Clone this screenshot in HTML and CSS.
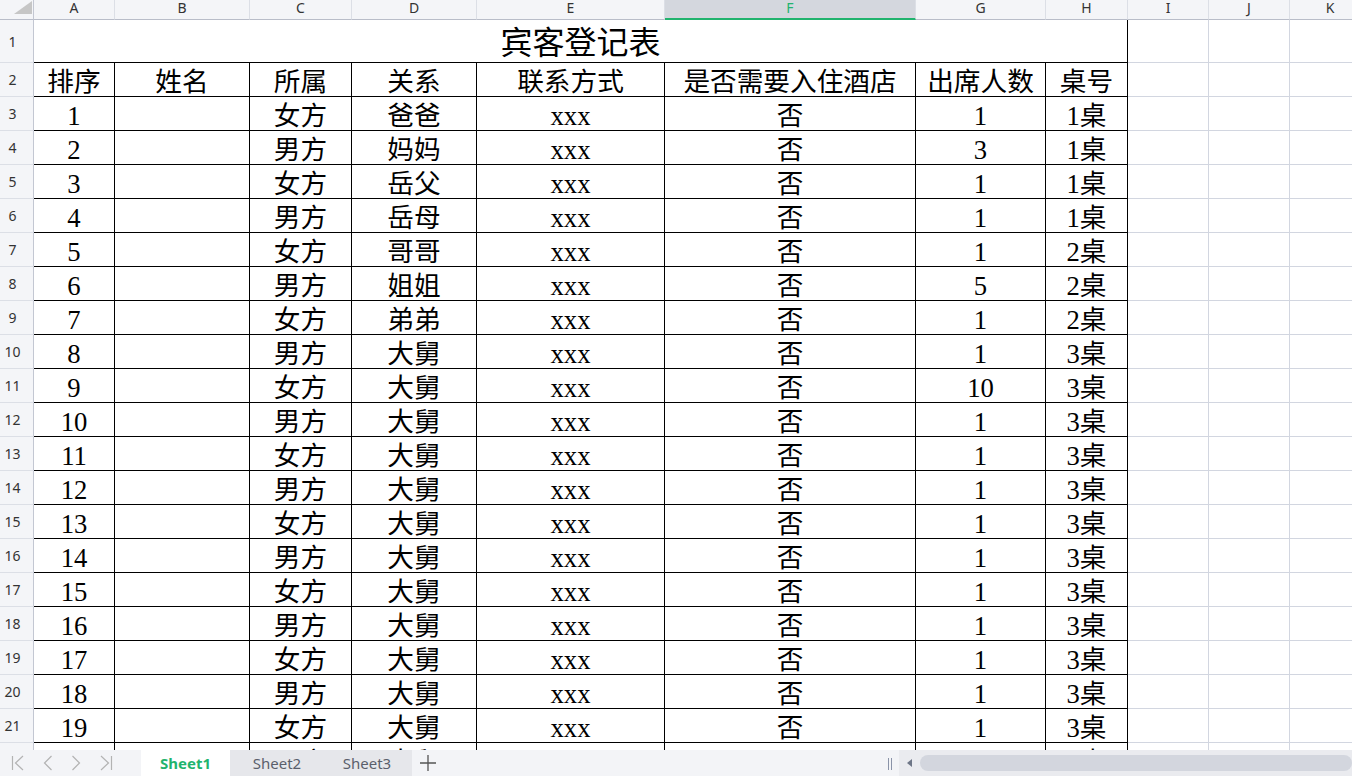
FILE: index.html
```html
<!DOCTYPE html>
<html>
  <head>
    <title>宾客登记表</title>
    <meta charset="UTF-8" />
    <link rel="stylesheet" href="styles.css">
  </head>

  <body>
    <div class="book">
      <div class="sheet">
        <div class="row head">
          <div class="corner"></div>
          <div class="ch">A</div><div class="ch">B</div><div class="ch">C</div><div class="ch">D</div>
          <div class="ch">E</div><div class="ch sel">F</div><div class="ch">G</div><div class="ch">H</div>
          <div class="ch">I</div><div class="ch">J</div><div class="ch">K</div>
        </div>

        <div class="row r1">
          <div class="rh">1</div>
          <div class="cell title">宾客登记表</div>
          <div class="blank"></div><div class="blank"></div><div class="blank"></div>
        </div>

        <div class="row">
          <div class="rh">2</div>
          <div class="cell">排序</div><div class="cell">姓名</div><div class="cell">所属</div><div class="cell">关系</div>
          <div class="cell">联系方式</div><div class="cell">是否需要入住酒店</div><div class="cell">出席人数</div><div class="cell">桌号</div>
          <div class="blank"></div><div class="blank"></div><div class="blank"></div>
        </div>

        <div class="row">
          <div class="rh">3</div>
          <div class="cell">1</div><div class="cell"></div><div class="cell">女方</div><div class="cell">爸爸</div>
          <div class="cell">xxx</div><div class="cell">否</div><div class="cell">1</div><div class="cell">1桌</div>
          <div class="blank"></div><div class="blank"></div><div class="blank"></div>
        </div>
        <div class="row">
          <div class="rh">4</div>
          <div class="cell">2</div><div class="cell"></div><div class="cell">男方</div><div class="cell">妈妈</div>
          <div class="cell">xxx</div><div class="cell">否</div><div class="cell">3</div><div class="cell">1桌</div>
          <div class="blank"></div><div class="blank"></div><div class="blank"></div>
        </div>
        <div class="row">
          <div class="rh">5</div>
          <div class="cell">3</div><div class="cell"></div><div class="cell">女方</div><div class="cell">岳父</div>
          <div class="cell">xxx</div><div class="cell">否</div><div class="cell">1</div><div class="cell">1桌</div>
          <div class="blank"></div><div class="blank"></div><div class="blank"></div>
        </div>
        <div class="row">
          <div class="rh">6</div>
          <div class="cell">4</div><div class="cell"></div><div class="cell">男方</div><div class="cell">岳母</div>
          <div class="cell">xxx</div><div class="cell">否</div><div class="cell">1</div><div class="cell">1桌</div>
          <div class="blank"></div><div class="blank"></div><div class="blank"></div>
        </div>
        <div class="row">
          <div class="rh">7</div>
          <div class="cell">5</div><div class="cell"></div><div class="cell">女方</div><div class="cell">哥哥</div>
          <div class="cell">xxx</div><div class="cell">否</div><div class="cell">1</div><div class="cell">2桌</div>
          <div class="blank"></div><div class="blank"></div><div class="blank"></div>
        </div>
        <div class="row">
          <div class="rh">8</div>
          <div class="cell">6</div><div class="cell"></div><div class="cell">男方</div><div class="cell">姐姐</div>
          <div class="cell">xxx</div><div class="cell">否</div><div class="cell">5</div><div class="cell">2桌</div>
          <div class="blank"></div><div class="blank"></div><div class="blank"></div>
        </div>
        <div class="row">
          <div class="rh">9</div>
          <div class="cell">7</div><div class="cell"></div><div class="cell">女方</div><div class="cell">弟弟</div>
          <div class="cell">xxx</div><div class="cell">否</div><div class="cell">1</div><div class="cell">2桌</div>
          <div class="blank"></div><div class="blank"></div><div class="blank"></div>
        </div>
        <div class="row">
          <div class="rh">10</div>
          <div class="cell">8</div><div class="cell"></div><div class="cell">男方</div><div class="cell">大舅</div>
          <div class="cell">xxx</div><div class="cell">否</div><div class="cell">1</div><div class="cell">3桌</div>
          <div class="blank"></div><div class="blank"></div><div class="blank"></div>
        </div>
        <div class="row">
          <div class="rh">11</div>
          <div class="cell">9</div><div class="cell"></div><div class="cell">女方</div><div class="cell">大舅</div>
          <div class="cell">xxx</div><div class="cell">否</div><div class="cell">10</div><div class="cell">3桌</div>
          <div class="blank"></div><div class="blank"></div><div class="blank"></div>
        </div>
        <div class="row">
          <div class="rh">12</div>
          <div class="cell">10</div><div class="cell"></div><div class="cell">男方</div><div class="cell">大舅</div>
          <div class="cell">xxx</div><div class="cell">否</div><div class="cell">1</div><div class="cell">3桌</div>
          <div class="blank"></div><div class="blank"></div><div class="blank"></div>
        </div>
        <div class="row">
          <div class="rh">13</div>
          <div class="cell">11</div><div class="cell"></div><div class="cell">女方</div><div class="cell">大舅</div>
          <div class="cell">xxx</div><div class="cell">否</div><div class="cell">1</div><div class="cell">3桌</div>
          <div class="blank"></div><div class="blank"></div><div class="blank"></div>
        </div>
        <div class="row">
          <div class="rh">14</div>
          <div class="cell">12</div><div class="cell"></div><div class="cell">男方</div><div class="cell">大舅</div>
          <div class="cell">xxx</div><div class="cell">否</div><div class="cell">1</div><div class="cell">3桌</div>
          <div class="blank"></div><div class="blank"></div><div class="blank"></div>
        </div>
        <div class="row">
          <div class="rh">15</div>
          <div class="cell">13</div><div class="cell"></div><div class="cell">女方</div><div class="cell">大舅</div>
          <div class="cell">xxx</div><div class="cell">否</div><div class="cell">1</div><div class="cell">3桌</div>
          <div class="blank"></div><div class="blank"></div><div class="blank"></div>
        </div>
        <div class="row">
          <div class="rh">16</div>
          <div class="cell">14</div><div class="cell"></div><div class="cell">男方</div><div class="cell">大舅</div>
          <div class="cell">xxx</div><div class="cell">否</div><div class="cell">1</div><div class="cell">3桌</div>
          <div class="blank"></div><div class="blank"></div><div class="blank"></div>
        </div>
        <div class="row">
          <div class="rh">17</div>
          <div class="cell">15</div><div class="cell"></div><div class="cell">女方</div><div class="cell">大舅</div>
          <div class="cell">xxx</div><div class="cell">否</div><div class="cell">1</div><div class="cell">3桌</div>
          <div class="blank"></div><div class="blank"></div><div class="blank"></div>
        </div>
        <div class="row">
          <div class="rh">18</div>
          <div class="cell">16</div><div class="cell"></div><div class="cell">男方</div><div class="cell">大舅</div>
          <div class="cell">xxx</div><div class="cell">否</div><div class="cell">1</div><div class="cell">3桌</div>
          <div class="blank"></div><div class="blank"></div><div class="blank"></div>
        </div>
        <div class="row">
          <div class="rh">19</div>
          <div class="cell">17</div><div class="cell"></div><div class="cell">女方</div><div class="cell">大舅</div>
          <div class="cell">xxx</div><div class="cell">否</div><div class="cell">1</div><div class="cell">3桌</div>
          <div class="blank"></div><div class="blank"></div><div class="blank"></div>
        </div>
        <div class="row">
          <div class="rh">20</div>
          <div class="cell">18</div><div class="cell"></div><div class="cell">男方</div><div class="cell">大舅</div>
          <div class="cell">xxx</div><div class="cell">否</div><div class="cell">1</div><div class="cell">3桌</div>
          <div class="blank"></div><div class="blank"></div><div class="blank"></div>
        </div>
        <div class="row">
          <div class="rh">21</div>
          <div class="cell">19</div><div class="cell"></div><div class="cell">女方</div><div class="cell">大舅</div>
          <div class="cell">xxx</div><div class="cell">否</div><div class="cell">1</div><div class="cell">3桌</div>
          <div class="blank"></div><div class="blank"></div><div class="blank"></div>
        </div>
        <div class="row">
          <div class="rh">22</div>
          <div class="cell">20</div><div class="cell"></div><div class="cell">男方</div><div class="cell">大舅</div>
          <div class="cell">xxx</div><div class="cell">否</div><div class="cell">1</div><div class="cell">3桌</div>
          <div class="blank"></div><div class="blank"></div><div class="blank"></div>
        </div>
      </div>

      <div class="tabbar">
        <div class="nav">
          <svg width="14" height="16" viewBox="0 0 14 16"><path d="M1.5 1v14M12 1L4.5 8 12 15" fill="none" stroke="#b3b3b3" stroke-width="1.2"/></svg>
          <svg width="10" height="16" viewBox="0 0 10 16"><path d="M8.5 1L1.5 8 8.5 15" fill="none" stroke="#b3b3b3" stroke-width="1.2"/></svg>
          <svg width="10" height="16" viewBox="0 0 10 16"><path d="M1.5 1L8.5 8 1.5 15" fill="none" stroke="#b3b3b3" stroke-width="1.2"/></svg>
          <svg width="14" height="16" viewBox="0 0 14 16"><path d="M12.5 1v14M2 1l7.5 7L2 15" fill="none" stroke="#b3b3b3" stroke-width="1.2"/></svg>
        </div>
        <div class="tab active">Sheet1</div>
        <div class="tabs">
          <div class="tab">Sheet2</div>
          <div class="tab">Sheet3</div>
        </div>
        <div class="add">
          <svg width="18" height="18" viewBox="0 0 18 18"><path d="M9 1v16M1 9h16" stroke="#555" stroke-width="1.3"/></svg>
        </div>
        <div class="spacer"></div>
        <div class="split"></div>
        <div class="hscroll">
          <span class="arrow"></span>
          <div class="thumb"></div>
        </div>
      </div>
    </div>
  </body>
</html>
```

FILE: styles.css
```css
body {
  margin: 0;
  overflow: hidden;
  background: #fff;
}

.book {
  width: 1352px;
  height: 778px;
  display: flex;
  flex-direction: column;
}

.sheet {
  height: 750px;
  overflow: hidden;
  flex-shrink: 0;
}

.row {
  display: grid;
  grid-template-columns: 34px 81px 135px 102px 125px 188px 251px 130px 82px 81px 81px 81px;
  height: 34px;
}

.row > div {
  box-sizing: border-box;
}

.head {
  height: 20px;
}

.r1 {
  height: 43px;
}

/* column and row headers */
.corner {
  background: #f4f5f8;
  border-right: 1px solid #c3c7d2;
  border-bottom: 1px solid #b9bdc9;
  display: flex;
  justify-content: flex-end;
  align-items: flex-start;
  padding: 1px 1px 0 0;
}

.corner::after {
  content: "";
  width: 18px;
  height: 13px;
  background: #c6c6c6;
  clip-path: polygon(100% 0, 100% 100%, 0 100%);
}

.ch {
  background: #f4f5f8;
  border-right: 1px solid #dcdfe6;
  border-bottom: 1px solid #b9bdc9;
  font-family: "Noto Sans", "Liberation Sans", sans-serif;
  font-size: 14px;
  line-height: 15px;
  color: #333;
  text-align: center;
}

.ch.sel {
  background: #d4d7de;
  border-bottom: 2px solid #21b36e;
  color: #21b36e;
}

.rh {
  background: #f4f5f8;
  border-right: 1px solid #c3c7d2;
  border-bottom: 1px solid #dcdfe6;
  font-family: "Noto Sans", "Liberation Sans", sans-serif;
  font-size: 14px;
  color: #333;
  display: flex;
  align-items: center;
  justify-content: center;
  padding-right: 8px;
}

/* data cells */
.cell {
  border-right: 1px solid #000;
  border-bottom: 1px solid #000;
  font-family: "Liberation Serif", "Noto Sans CJK SC", serif;
  font-size: 26.67px;
  line-height: 27px;
  color: #000;
  display: flex;
  align-items: flex-end;
  justify-content: center;
  white-space: nowrap;
  padding-bottom: 0;
}

.title {
  grid-column: 2 / 10;
  font-size: 32px;
  line-height: 38px;
  align-items: flex-end;
}

.blank {
  border-right: 1px solid #d2d6e0;
  border-bottom: 1px solid #d2d6e0;
}

/* bottom sheet tabs */
.tabbar {
  height: 28px;
  display: flex;
  align-items: stretch;
  background: #f3f4f7;
  border-bottom: 2px solid #fff;
  font-family: "Noto Sans", "Liberation Sans", sans-serif;
  font-size: 15px;
}

.nav {
  width: 141px;
  display: flex;
  align-items: center;
  gap: 18px;
  padding-left: 11px;
  box-sizing: border-box;
}

.tab {
  width: 89px;
  display: flex;
  align-items: center;
  justify-content: center;
  color: #5a5f6b;
}

.tab.active {
  background: #fff;
  color: #1fb46e;
  font-weight: bold;
}

.tabs {
  display: flex;
  background: #e6e7eb;
  width: 180px;
  padding-left: 2px;
}

.tabs .tab {
  width: 90px;
}

.add {
  width: 32px;
  display: flex;
  align-items: center;
  justify-content: center;
}

.spacer {
  flex: 1;
}

.split {
  width: 4px;
  margin: 8px 7px 0 0;
  height: 12px;
  border-left: 1px solid #8a93a8;
  border-right: 1px solid #8a93a8;
  box-sizing: border-box;
}

.hscroll {
  width: 453px;
  background: #eaebef;
  display: flex;
  align-items: center;
  gap: 8px;
  padding-left: 8px;
  box-sizing: border-box;
}

.arrow {
  width: 0;
  height: 0;
  border-top: 4px solid transparent;
  border-bottom: 4px solid transparent;
  border-right: 5px solid #6e7687;
}

.thumb {
  flex: 1;
  height: 16px;
  border-radius: 8px;
  background: #d3d6de;
}
```
